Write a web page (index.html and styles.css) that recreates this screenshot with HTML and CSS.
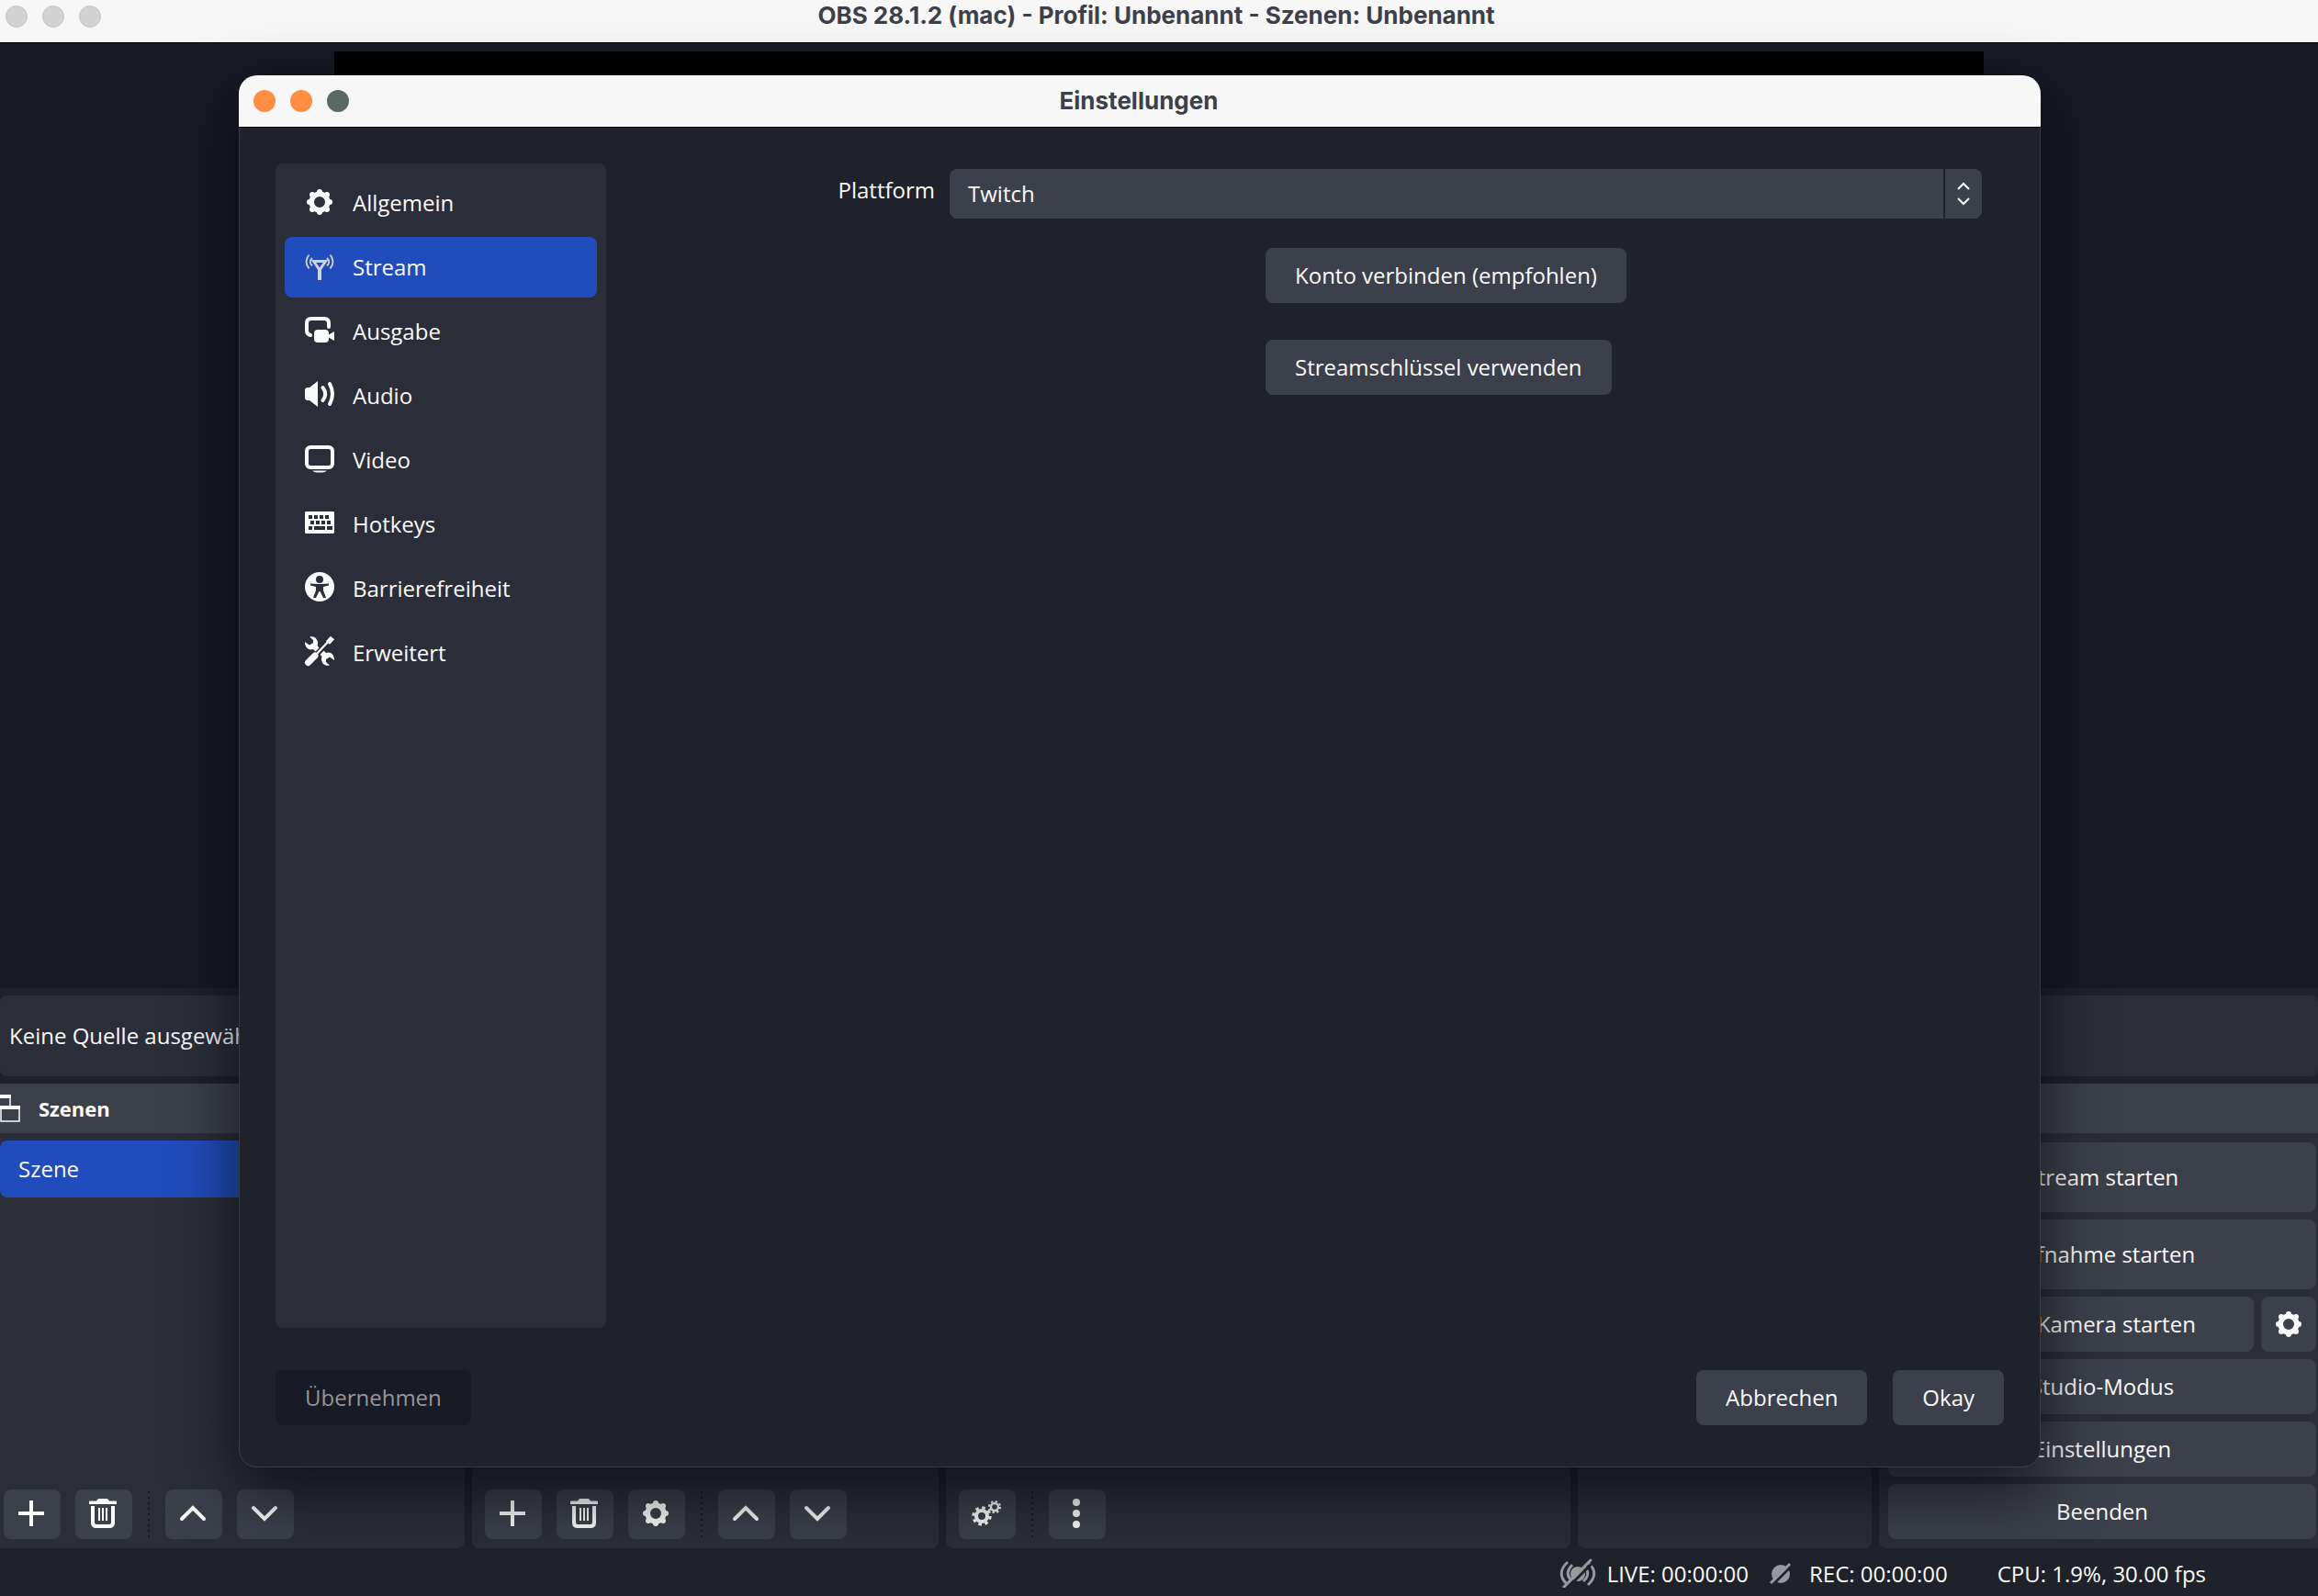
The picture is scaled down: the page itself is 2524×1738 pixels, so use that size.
FILE: index.html
```html
<!DOCTYPE html>
<html lang="de">
<head>
<meta charset="utf-8">
<title>OBS 28.1.2 (mac) - Profil: Unbenannt - Szenen: Unbenannt</title>
<link rel="stylesheet" href="styles.css">
</head>
<body>
<svg class="sprite" aria-hidden="true">
  <symbol id="gear" viewBox="0 0 32 32">
    <circle cx="16" cy="16" r="8.8" fill="none" stroke="currentColor" stroke-width="5.6"/>
    <g fill="currentColor">
      <circle cx="16" cy="5" r="3"/><circle cx="16" cy="27" r="3"/><circle cx="5" cy="16" r="3"/><circle cx="27" cy="16" r="3"/>
      <circle cx="8" cy="8" r="3"/><circle cx="24" cy="8" r="3"/><circle cx="8" cy="24" r="3"/><circle cx="24" cy="24" r="3"/>
    </g>
  </symbol>
  <symbol id="plus" viewBox="0 0 32 32"><path d="M16 2v28M2 16h28" stroke="currentColor" stroke-width="4"/></symbol>
  <symbol id="trash" viewBox="0 0 32 32">
    <path d="M1 3.500q0-1 1-1h7l2-2.500h10l2 2.500h7q1 0 1 1V6H1z" fill="currentColor"/>
    <path d="M5 8v18q0 4 4 4h14q4 0 4-4V8" fill="none" stroke="currentColor" stroke-width="4"/>
    <path d="M12 10v14M16 10v14M20 10v14" stroke="currentColor" stroke-width="2"/>
  </symbol>
  <symbol id="up" viewBox="0 0 32 32"><path d="M4 22L16 10l12 12" fill="none" stroke="currentColor" stroke-width="4" stroke-linecap="round"/></symbol>
  <symbol id="down" viewBox="0 0 32 32"><path d="M4 10l12 12 12-12" fill="none" stroke="currentColor" stroke-width="4" stroke-linecap="round"/></symbol>
</svg>

<header class="titlebar">
  <div class="lights"><i></i><i></i><i></i></div>
  <h1>OBS 28.1.2 (mac) - Profil: Unbenannt - Szenen: Unbenannt</h1>
</header>

<main class="app">
  <section class="preview"><div class="canvas"></div></section>
  <section class="context">Keine Quelle ausgewählt</section>

  <section class="docks">
    <div class="dock dock-scenes">
      <h2 class="dock-head">
        <svg class="dock-icon" width="22" height="32" viewBox="0 0 22 32" fill="none" stroke="currentColor" stroke-width="1.500">
          <path d="M-8 1v18h8M11 14V2"/><path d="M-8 3h20" stroke-width="4"/>
          <path d="M1 15v15h20V15"/><path d="M0 15h22" stroke-width="4"/>
        </svg>
        Szenen
      </h2>
      <ul class="scene-list"><li>Szene</li></ul>
      <div class="tools">
        <button class="tool" aria-label="Hinzufügen"><svg><use href="#plus"/></svg></button>
        <button class="tool" aria-label="Entfernen"><svg><use href="#trash"/></svg></button>
        <span class="sep"></span>
        <button class="tool" aria-label="Nach oben"><svg><use href="#up"/></svg></button>
        <button class="tool" aria-label="Nach unten"><svg><use href="#down"/></svg></button>
      </div>
    </div>
    <div class="dock">
      <div class="dock-head"></div>
      <div class="tools">
        <button class="tool" aria-label="Hinzufügen"><svg><use href="#plus"/></svg></button>
        <button class="tool" aria-label="Entfernen"><svg><use href="#trash"/></svg></button>
        <button class="tool" aria-label="Eigenschaften"><svg><use href="#gear"/></svg></button>
        <span class="sep"></span>
        <button class="tool" aria-label="Nach oben"><svg><use href="#up"/></svg></button>
        <button class="tool" aria-label="Nach unten"><svg><use href="#down"/></svg></button>
      </div>
    </div>
    <div class="dock">
      <div class="dock-head"></div>
      <div class="tools">
        <button class="tool" aria-label="Audioeigenschaften">
          <svg viewBox="0 0 32 32" fill="none" stroke="currentColor">
            <circle cx="11" cy="19" r="6" stroke-width="4"/>
            <circle cx="11" cy="19" r="9" stroke-width="3.400" stroke-dasharray="3.500 3.568"/>
            <circle cx="25" cy="9" r="4" stroke-width="2.400"/>
            <circle cx="25" cy="9" r="6" stroke-width="2.200" stroke-dasharray="2.300 2.412"/>
          </svg>
        </button>
        <span class="sep"></span>
        <button class="tool" aria-label="Menü">
          <svg viewBox="0 0 32 32" fill="currentColor"><circle cx="16" cy="4" r="4"/><circle cx="16" cy="16" r="4"/><circle cx="16" cy="28" r="4"/></svg>
        </button>
      </div>
    </div>
    <div class="dock"><div class="dock-head"></div></div>
    <div class="dock">
      <div class="dock-head"></div>
      <div class="controls">
        <button class="btn tall">Stream starten</button>
        <button class="btn tall">Aufnahme starten</button>
        <div class="camera">
          <button class="btn">Virtuelle Kamera starten</button>
          <button class="btn square" aria-label="Kamera konfigurieren"><svg><use href="#gear"/></svg></button>
        </div>
        <button class="btn">Studio-Modus</button>
        <button class="btn">Einstellungen</button>
        <button class="btn">Beenden</button>
      </div>
    </div>
  </section>

  <footer class="status">
    <span class="live">
      <svg width="40" height="32" viewBox="0 0 40 32" fill="none" stroke="currentColor" stroke-width="3">
        <path d="M9 4Q-4 16 8 28M14 7Q5 16 13 24M32 5Q44 17 31 29M27 9Q35 17 26 25"/>
        <circle cx="20" cy="17" r="8" fill="currentColor" stroke="none"/>
        <path d="M8 33L37 4" stroke="#1f222b" stroke-width="3"/><path d="M5 31L34 2" stroke-linecap="round"/>
      </svg>
      LIVE: 00:00:00
    </span>
    <span class="rec">
      <svg width="24" height="24" viewBox="0 0 24 24" fill="none" stroke="currentColor">
        <circle cx="13" cy="13" r="10" fill="currentColor" stroke="none"/>
        <path d="M3 26L26 3" stroke="#1f222b" stroke-width="3"/><path d="M2 23L23 2" stroke-width="3"/>
      </svg>
      REC: 00:00:00
    </span>
    <span>CPU: 1.9%, 30.00 fps</span>
  </footer>
</main>

<div class="dialog" role="dialog" aria-labelledby="dlg-title">
  <header class="dialog-bar">
    <div class="lights"><i></i><i></i><i></i></div>
    <h2 id="dlg-title">Einstellungen</h2>
  </header>
  <div class="dialog-body">
    <nav class="sidebar">
      <a href="#"><svg viewBox="0 0 32 32"><use href="#gear"/></svg>Allgemein</a>
      <a href="#" class="active" aria-current="page">
        <svg class="dim" viewBox="0 0 32 32" fill="none" stroke="currentColor">
          <path d="M9.500 10.500h13L17 18.500h-2z" stroke-width="3"/><path d="M16 17v14" stroke-width="4"/>
          <path d="M4.500 3.500Q-1.500 11 4.500 18.500M8 7Q3.500 11 8 15.500M27.500 3.500Q33.500 11 27.500 18.500M24 7Q28.500 11 24 15.500" stroke-width="1.800"/>
        </svg>Stream</a>
      <a href="#">
        <svg viewBox="0 0 32 32">
          <path d="M26 12V8q0-5-5-5H7Q2 3 2 8v8q0 4 4 5" fill="none" stroke="currentColor" stroke-width="4" stroke-linecap="round"/>
          <rect x="10" y="15" width="16" height="14" rx="4" fill="currentColor"/><path d="M25 21l7-4v10l-7-4z" fill="currentColor"/>
        </svg>Ausgabe</a>
      <a href="#">
        <svg viewBox="0 0 32 32">
          <path d="M0 11q0-3 3-3h2l9-7v28l-9-7H3q-3 0-3-3z" fill="currentColor"/>
          <path d="M19.500 8Q25 15 19.500 22M27 4Q33 15 27 26" fill="none" stroke="currentColor" stroke-width="4" stroke-linecap="round"/>
        </svg>Audio</a>
      <a href="#">
        <svg viewBox="0 0 32 32">
          <rect x="2" y="3" width="28" height="22" rx="4" fill="none" stroke="currentColor" stroke-width="4"/>
          <path d="M8 28.500h16q-2 2-5 2h-6q-3 0-5-2z" fill="currentColor"/>
        </svg>Video</a>
      <a href="#">
        <svg viewBox="0 0 32 32">
          <path fill="currentColor" fill-rule="evenodd" d="M1 3h30l1 1v22l-1 1H1l-1-1V4zM4 7v4h4V7zM10 7v4h4V7zM16 7v4h4V7zM22 7v4h4V7zM6 13v4h4v-4zM12 13v4h4v-4zM18 13v4h4v-4zM24 13v4h4v-4zM4 19v4h4v-4zM10 19v4h12v-4zM24 19v4h6v-4z"/>
        </svg>Hotkeys</a>
      <a href="#">
        <svg viewBox="0 0 32 32">
          <circle cx="16" cy="15" r="16" fill="currentColor"/>
          <g class="figure"><circle cx="16" cy="7" r="4"/><path d="M6 11.500l8 .5h4l8-.5v2l-6 1.500v4l3 8h-3l-3.500-7h-1L12 27H9l3-8v-4l-6-1.500z"/></g>
        </svg>Barrierefreiheit</a>
      <a href="#">
        <svg viewBox="0 0 32 32">
          <path id="wrench" d="M5-.5Q12-2 14 5q.5 2-.5 4l2 2.500-4 4L9 13Q2 15 0 7V5l5 3.500L9 6V3z" fill="currentColor"/>
          <use href="#wrench" transform="rotate(180 16 15)"/>
          <path d="M2 30L29 2" stroke="#2b2e39" stroke-width="5"/>
          <g fill="none" stroke="currentColor">
            <path d="M3.500 27.500L11 20" stroke-width="7" stroke-linecap="round"/><path d="M11 20L26 4" stroke-width="2.400"/><path d="M25 6l5-5.500" stroke-width="5.500"/>
          </g>
        </svg>Erweitert</a>
    </nav>
    <form class="form">
      <div class="row">
        <label for="platform">Plattform</label>
        <div class="select">
          <select id="platform"><option>Twitch</option></select>
          <span class="spin">
            <svg width="14" height="26" viewBox="0 0 14 26" fill="none" stroke="currentColor" stroke-width="2"><path d="M1 8l6-6 6 6M1 18l6 6 6-6"/></svg>
          </span>
        </div>
      </div>
      <div class="connect">
        <button type="button" class="btn">Konto verbinden (empfohlen)</button>
        <button type="button" class="btn">Streamschlüssel verwenden</button>
      </div>
    </form>
  </div>
  <div class="dialog-foot">
    <button class="btn apply" disabled>Übernehmen</button>
    <button class="btn">Abbrechen</button>
    <button class="btn">Okay</button>
  </div>
</div>
</body>
</html>
```
FILE: styles.css
```css
:root {
  --base: #1f222b;
  --panel: #2b2e39;
  --button: #3c404b;
  --deep: #181a25;
  --accent: #204cbc;
  --text: #fafafa;
  --bar: #f7f7f7;
}

* { box-sizing: border-box; }

body {
  margin: 0;
  min-height: 100vh;
  position: relative;
  display: flex;
  flex-direction: column;
  overflow: hidden;
  background: var(--base);
  color: var(--text);
  font: 24px "Open Sans", "Noto Sans", sans-serif;
}

h1, h2, ul { margin: 0; padding: 0; list-style: none; }
.sprite { position: absolute; width: 0; height: 0; }
svg { flex: none; }

button, select { font: inherit; color: inherit; border: 0; }
button { display: flex; align-items: center; justify-content: center; padding: 0; }

/* window title bars */
.titlebar, .dialog-bar {
  display: grid;
  grid-template-columns: 1fr auto 1fr;
  align-items: center;
  background: var(--bar);
  color: var(--button);
  border-bottom: 1px solid #000;
}
.titlebar { height: 47px; padding: 0 12px 11px 6px; }
.dialog-bar { height: 57px; padding: 0 18px 0 16px; border-radius: 20px 20px 0 0; }
.titlebar h1, .dialog-bar h2 { padding-bottom: 2px; font: 700 26px Inter, sans-serif; }
.lights { display: flex; gap: 16px; }
.lights i { width: 24px; height: 24px; border-radius: 50%; background: #d2d2d2; border: 1px solid #c4c4c4; }
.dialog .lights i { background: #ff8e42; border: 0; }
.dialog .lights i:last-child { background: #5c6866; }

/* main window */
.app { flex: 1; display: flex; flex-direction: column; }
.preview {
  flex: 1 1 0;
  min-height: 0;
  padding: 9px 0 10px;
  display: flex;
  justify-content: center;
  background: var(--deep);
}
.canvas { height: 100%; aspect-ratio: 16 / 9; background: #000; }
.context {
  height: 88px;
  margin: 8px 0;
  padding: 0 0 2px 10px;
  display: flex;
  align-items: center;
  background: var(--panel);
  border-radius: 8px;
}

.docks { display: grid; grid-template-columns: 506fr 508fr 680fr 320fr 478fr; gap: 8px; }
.dock {
  min-width: 0;
  display: flex;
  flex-direction: column;
  background: var(--panel);
  border-radius: 0 0 8px 8px;
}
.dock-scenes { border-radius: 0 0 8px 0; }
.dock:last-child { border-radius: 0 0 0 8px; }
.dock-head {
  height: 54px;
  display: flex;
  align-items: center;
  gap: 20px;
  background: var(--button);
  font-size: 22px;
  font-weight: 700;
}
.scene-list li {
  height: 62px;
  margin-top: 8px;
  padding: 0 0 2px 20px;
  display: flex;
  align-items: center;
  background: var(--accent);
  border-radius: 8px;
}

.tools { display: flex; gap: 16px; margin-top: auto; padding: 0 14px 10px; }
.dock-scenes .tools { padding-left: 4px; }
.tool { width: 62px; height: 54px; padding: 0 2px 2px 0; background: var(--button); border-radius: 8px; }
.tool svg, .square svg { width: 32px; height: 32px; }
.sep {
  width: 4px;
  margin: 2px 0;
  background: repeating-linear-gradient(var(--deep) 0 2px, transparent 2px 6px) center / 2px 100% no-repeat;
}

.btn { height: 60px; padding: 0 32px 2px; background: var(--button); border-radius: 8px; white-space: nowrap; }
.controls { display: flex; flex-direction: column; gap: 8px; padding: 10px 2px 10px 10px; }
.tall { height: 76px; }
.camera { display: flex; gap: 8px; }
.camera .btn:first-child { flex: 1; }
.square { width: 60px; padding: 0; }

.status {
  height: 52px;
  padding: 2px 122px 0 0;
  display: flex;
  justify-content: flex-end;
  align-items: center;
}
.status span { display: flex; align-items: center; }
.status svg { color: #98999d; }
.live { gap: 12px; margin-right: 22px; }
.rec { gap: 20px; margin-right: 54px; }

/* settings window */
.dialog {
  position: absolute;
  inset: 82px 302px 140px 260px;
  display: flex;
  flex-direction: column;
  background: var(--base);
  border-radius: 20px;
  box-shadow: inset 0 0 0 1px rgba(255, 255, 255, .12), 0 24px 70px 4px rgba(0, 0, 0, .6);
}
.dialog-body { flex: 1; display: flex; padding: 39px 64px 0 40px; }
.sidebar {
  width: 360px;
  padding: 10px;
  display: flex;
  flex-direction: column;
  gap: 4px;
  background: var(--panel);
  border-radius: 8px;
}
.sidebar a {
  height: 66px;
  padding: 0 0 2px 22px;
  display: flex;
  align-items: center;
  gap: 20px;
  border-radius: 8px;
  color: inherit;
  text-decoration: none;
}
.sidebar a.active { background: var(--accent); }
.sidebar svg { width: 32px; height: 32px; overflow: visible; }
.dim { color: #d2d2d2; }
.figure { fill: var(--panel); }

.form { flex: 1; padding-top: 6px; }
.row { display: flex; gap: 16px; }
.row label { width: 358px; line-height: 46px; text-align: right; }
.select { flex: 1; position: relative; display: flex; }
.select select {
  flex: 1;
  height: 54px;
  padding: 0 20px 2px;
  appearance: none;
  background: var(--button);
  border-radius: 8px;
}
.spin {
  position: absolute;
  inset: 0 0 0 auto;
  width: 42px;
  display: flex;
  align-items: center;
  justify-content: center;
  border-left: 2px solid var(--base);
  pointer-events: none;
}
.connect {
  margin: 32px 0 0 718px;
  display: flex;
  flex-direction: column;
  align-items: flex-start;
  gap: 40px;
}
.dialog-foot { display: flex; gap: 28px; padding: 46px 40px; }
.apply { margin-right: auto; background: var(--deep); color: #949698; }
```
